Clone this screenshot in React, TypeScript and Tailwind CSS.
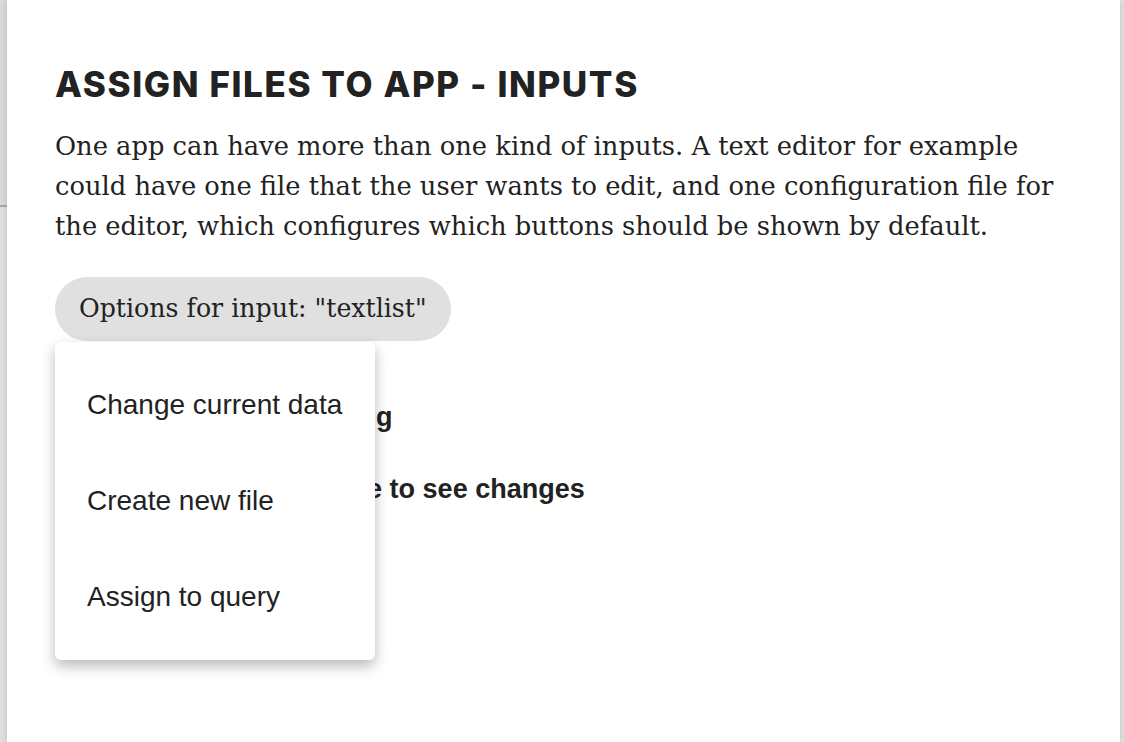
import React from 'react';

const MENU_ITEMS = ['Change current data', 'Create new file', 'Assign to query'];

export default function App() {
    return (
        <div className="flex h-[742px] w-full overflow-hidden bg-[#dcdcdc]">
            {/* backdrop strip on the left */}
            <div className="flex w-[7px] flex-col">
                <div className="h-[205px] bg-[#d9d9d9]"></div>
                <div className="h-[2px] bg-[#a8a8a8]"></div>
                <div className="flex-1 bg-[#dedede]"></div>
            </div>

            {/* modal */}
            <div className="relative flex-1 bg-white pl-[48px] pr-[24px] pt-[62px] shadow-[0_0_6px_rgba(0,0,0,0.15)]">
                <h1 className="text-[35px] font-extrabold leading-[44px] tracking-[1.6px] text-[#222]" style={{ fontFamily: 'Inter, "Noto Sans", sans-serif' }}>
                    ASSIGN FILES TO APP - INPUTS
                </h1>
                <p className="mt-[20px] text-[25.75px] leading-[40px] text-[#222]" style={{ fontFamily: '"DejaVu Serif", serif' }}>
                    One app can have more than one kind of inputs. A text editor for example could have one file that the user wants to edit, and one configuration file for the editor, which configures which buttons should be shown by default.
                </p>

                <div className="relative mt-[31px] flex">
                    <button className="h-[64px] rounded-full bg-[#e0e0e0] px-[24px] text-[25.25px] text-[#222]" style={{ fontFamily: '"DejaVu Serif", serif' }}>
                        Options for input: "textlist"
                    </button>

                    {/* dropdown */}
                    <div className="absolute left-0 top-[65px] z-10 w-[320px] rounded-[6px] bg-white py-[15px] shadow-[0_6px_14px_rgba(0,0,0,0.28)]">
                        {MENU_ITEMS.map((item) => (
                            <div key={item} className="flex h-[96px] items-center px-[32px] text-[28px] text-[#222]" style={{ fontFamily: '"Liberation Sans", Arial, sans-serif' }}>
                                {item}
                            </div>
                        ))}
                    </div>
                </div>

                {/* content under the dropdown */}
                <div className="mt-[61px] flex flex-col gap-[41px] text-[27px] font-bold leading-[31px] text-[#222]" style={{ fontFamily: '"Liberation Sans", Arial, sans-serif' }}>
                    <div>Keep preview while typing</div>
                    <div>Refresh the preview page to see changes</div>
                </div>
            </div>

            {/* backdrop strip on the right */}
            <div className="w-[4px] bg-[#e2e2e2]"></div>
        </div>
    );
}
